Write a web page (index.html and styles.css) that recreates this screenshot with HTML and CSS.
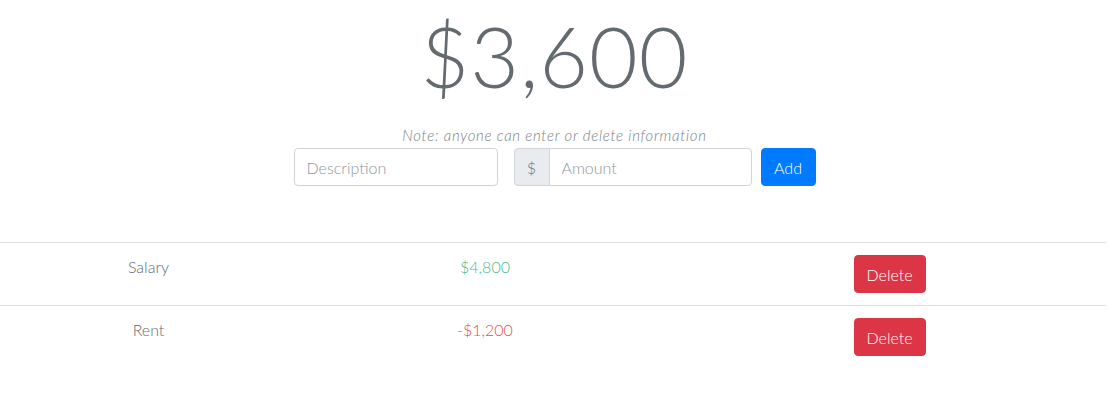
FILE: index.html
```html
<!DOCTYPE html>
<html>
<head>
<meta charset="utf-8">
<link rel="stylesheet" href="styles.css">
</head>
<body>
<div class="page">
  <div class="title">$3,600</div>
  <p class="note">Note: anyone can enter or delete information</p>
  <form class="entry-form">
    <input class="form-control desc" type="text" placeholder="Description">
    <div class="input-group">
      <span class="addon">$</span>
      <input class="form-control amount" type="text" placeholder="Amount">
    </div>
    <button type="button" class="btn btn-primary">Add</button>
  </form>
  <table class="ledger">
    <colgroup>
      <col class="col-name">
      <col class="col-amount">
      <col class="col-action">
    </colgroup>
    <tbody>
      <tr>
        <td>Salary</td>
        <td class="pos">$4,800</td>
        <td><button type="button" class="btn btn-danger">Delete</button></td>
      </tr>
      <tr>
        <td>Rent</td>
        <td class="neg">-$1,200</td>
        <td><button type="button" class="btn btn-danger">Delete</button></td>
      </tr>
    </tbody>
  </table>
</div>
</body>
</html>
```
FILE: styles.css
```css
* { box-sizing: border-box; }
html, body {
  margin: 0;
  padding: 0;
  background: #fff;
}
body {
  font-family: "Lato", "Noto Sans", sans-serif;
  font-weight: 300;
  color: #636b6f;
  font-size: 16px;
}
.page {
  display: flex;
  flex-direction: column;
  align-items: center;
}
.title {
  font-size: 84px;
  line-height: 84px;
  font-weight: 300;
  padding-top: 14px;
  color: #636b6f;
  letter-spacing: 1px;
}
.note {
  margin: 28px 0 0 0;
  font-style: italic;
  font-size: 15px;
  line-height: 18px;
  letter-spacing: 0.7px;
  color: #7a8286;
}
.entry-form {
  display: flex;
  align-items: center;
  margin-top: 4px;
}
.form-control {
  height: 38px;
  border: 1px solid #ced4da;
  border-radius: 4px;
  padding: 6px 12px;
  font-family: inherit;
  font-weight: 300;
  font-size: 16px;
  color: #495057;
  background: #fff;
  outline: none;
}
.form-control::placeholder { color: #8f969c; }
.desc { width: 204px; }
.input-group {
  display: flex;
  margin-left: 16px;
}
.addon {
  display: flex;
  align-items: center;
  justify-content: center;
  width: 36px;
  height: 38px;
  background: #e9ecef;
  border: 1px solid #ced4da;
  border-radius: 4px 0 0 4px;
  color: #6c757d;
  font-size: 16px;
}
.amount {
  width: 203px;
  margin-left: -1px;
  border-radius: 0 4px 4px 0;
}
.btn {
  height: 38px;
  border: 1px solid transparent;
  border-radius: 4px;
  padding: 0 12px;
  font-family: inherit;
  font-weight: 300;
  font-size: 16px;
  color: #fff;
  cursor: pointer;
}
.btn-primary {
  background: #007bff;
  border-color: #007bff;
  margin-left: 9px;
  width: 55px;
}
.btn-danger {
  background: #dc3545;
  border-color: #dc3545;
  width: 72px;
}
.ledger {
  margin-top: 56px;
  align-self: flex-start;
  width: 1106px;
  border-collapse: collapse;
  table-layout: fixed;
}
.col-name { width: 297px; }
.col-amount { width: 376px; }
.col-action { width: 433px; }
.ledger td {
  border-top: 1px solid #dee2e6;
  padding: 12px;
  text-align: center;
  vertical-align: top;
  line-height: 24px;
  font-size: 16px;
  color: #636b6f;
}
.ledger td.pos { color: #4cb882; }
.ledger td.neg { color: #ec4b4b; }
```
